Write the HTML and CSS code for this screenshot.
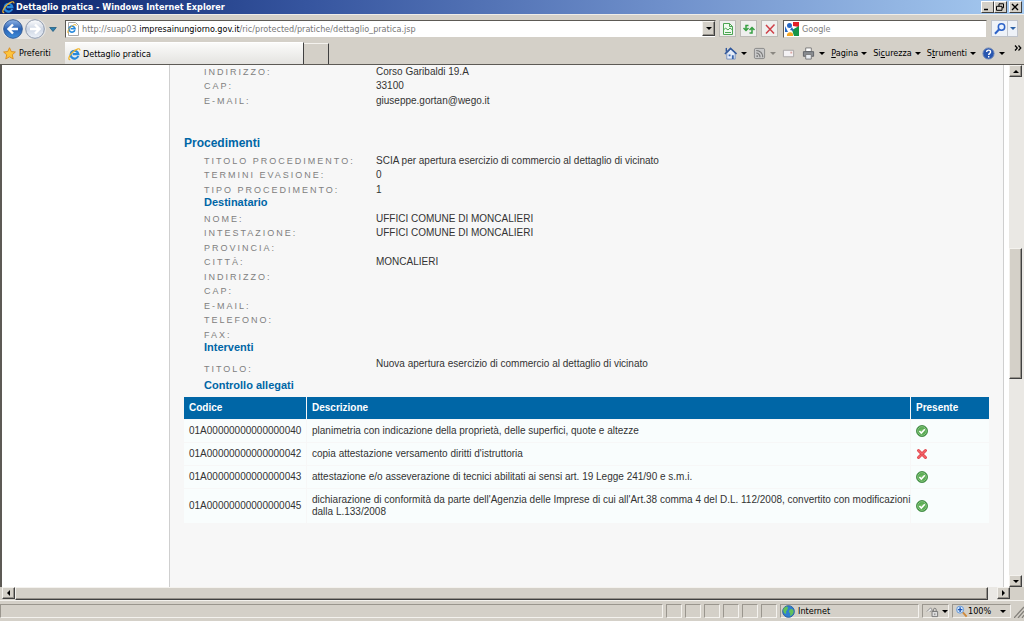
FILE: index.html
```html
<!DOCTYPE html>
<html lang="it">
<head>
<meta charset="utf-8">
<title>Dettaglio pratica</title>
<link rel="stylesheet" href="styles.css">
</head>
<body>
<svg class="defs" aria-hidden="true">
  <defs>
    <linearGradient id="blue" x2="0" y2="1"><stop offset="0" stop-color="#8fb4e6"/><stop offset=".5" stop-color="#2a62b4"/><stop offset="1" stop-color="#3f8fdc"/></linearGradient>
    <linearGradient id="pale" x2="0" y2="1"><stop offset="0" stop-color="#fff"/><stop offset=".5" stop-color="#cdd6e4"/><stop offset="1" stop-color="#edf2f9"/></linearGradient>
    <radialGradient id="green"><stop offset="0" stop-color="#7cc46a"/><stop offset="1" stop-color="#3d9440"/></radialGradient>
    <symbol id="ie" viewBox="0 0 14 14"><path d="M11 8.6A4.2 4.2 0 1 1 11.200 6.600H5" fill="none" stroke="#2789dc" stroke-width="2.300"/><path d="M2.400 12.500C-.8 13 1.500 7.500 5.500 4S13-.4 12.800 2.600" fill="none" stroke="#efb32b" stroke-width="1.300"/></symbol>
    <symbol id="ok" viewBox="0 0 12 12"><circle cx="6" cy="6" r="5.500" fill="url(#green)" stroke="#37813a" stroke-width=".8"/><circle cx="6" cy="6" r="4.300" fill="none" stroke="#a4d897" stroke-width=".7"/><path d="M3.400 6l1.900 2 3.500-3.700" fill="none" stroke="#fff" stroke-width="1.600"/></symbol>
    <symbol id="ko" viewBox="0 0 12 12"><path d="M2.500 2.500l7 7M9.500 2.500l-7 7" stroke="#e0444b" stroke-width="3" stroke-linecap="round"/><path d="M2.500 2.500l7 7M9.500 2.500l-7 7" stroke="#f4656a" stroke-width="1.400" stroke-linecap="round"/></symbol>
  </defs>
</svg>

<header class="titlebar">
  <svg class="icon"><use href="#ie"/></svg>
  <h1 class="window-title">Dettaglio pratica - Windows Internet Explorer</h1>
  <button class="win-btn" aria-label="Riduci a icona"><svg viewBox="0 0 10 8"><path d="M2 6.500h4" stroke="#000" stroke-width="1.500"/></svg></button>
  <button class="win-btn" aria-label="Ripristina"><svg viewBox="0 0 10 8"><path d="M4 3V.8h4.500v4H7M1.500 3.300H7v4H1.500z" fill="none" stroke="#000"/></svg></button>
  <button class="win-btn win-close" aria-label="Chiudi"><svg viewBox="0 0 10 8"><path d="M2 1l6 6M8 1L2 7" stroke="#000" stroke-width="1.400"/></svg></button>
</header>

<div class="navbar">
  <div class="history">
    <button class="flat" aria-label="Indietro"><svg class="round" viewBox="0 0 20 20"><circle cx="10" cy="10" r="9.300" fill="url(#blue)" stroke="#345b94"/><path d="M15 10H6M10 5.500L5.500 10l4.500 4.500" fill="none" stroke="#fff" stroke-width="2.400"/></svg></button>
    <button class="flat" aria-label="Avanti"><svg class="round" viewBox="0 0 20 20"><circle cx="10" cy="10" r="9.300" fill="url(#pale)" stroke="#8b97ab"/><path d="M5 10h9M10 5.500l4.500 4.500-4.500 4.500" fill="none" stroke="#fff" stroke-width="2.400"/></svg></button>
  </div>
  <button class="flat recent" aria-label="Pagine recenti"><svg class="tiny" viewBox="0 0 8 8"><path d="M.7 2.500h6.600L4 6.500z" fill="#2d7fae" stroke="#195578" stroke-width=".7"/></svg></button>
  <div class="address">
    <svg class="page-icon" viewBox="0 0 12 14"><path d="M1.500.5h7l3 3v10h-10z" fill="#fff" stroke="#a8a8a8"/><use href="#ie" x="0" y="2" width="10" height="10"/></svg>
    <div class="url" role="textbox" contenteditable="true" spellcheck="false" aria-label="Indirizzo">http://suap03.<span class="domain">impresainungiorno.gov.it</span>/ric/protected/pratiche/dettaglio_pratica.jsp</div>
    <button class="raised drop" aria-label="Mostra indirizzi"><i class="down"></i></button>
  </div>
  <button class="tool" aria-label="Visualizzazione compatibilità"><svg viewBox="0 0 14 14"><path d="M2.500 1.500h6l3 3v8h-9zM8.500 1.500v3h3" fill="#eefaee" stroke="#4ba552"/><path d="M2.500 8l2-2 2.500 2 2-2 2.500 2M4 10.500h6" fill="none" stroke="#4ba552"/></svg></button>
  <button class="tool" aria-label="Aggiorna"><svg viewBox="0 0 14 14"><path d="M6.500 3.500H4v4M1.500 6L4 8.500 6.500 6M7.500 11H10V6.500M7.500 8L10 5.500 12.500 8" fill="none" stroke="#37a043" stroke-width="1.500"/></svg></button>
  <button class="tool" aria-label="Interrompi"><svg viewBox="0 0 14 14"><path d="M3 3l8 8.500M11.500 2.500L3 11.500" fill="none" stroke="#cf4048" stroke-width="1.500"/></svg></button>
  <div class="search">
    <svg class="google" viewBox="0 0 14 14"><path fill="#fff" d="M0 0h14v14H0z"/><path d="M8 0h6v5L8 4z" fill="#e21f26"/><path d="M14 4v10H9L7 8z" fill="#159447"/><path d="M2 14c-1-4 5-5 6-2v2z" fill="#f5a623"/><circle cx="4.500" cy="3.500" r="2.500" fill="#2466c4"/><path d="M0 4l3 6H0z" fill="#2466c4"/><path d="M7 5l2 4-4-1z" fill="#2466c4"/></svg>
    <input class="search-input" type="text" placeholder="Google" aria-label="Cerca">
  </div>
  <div class="search-go">
    <button class="go" aria-label="Avvia ricerca"><svg viewBox="0 0 14 14"><circle cx="8.500" cy="5" r="3.200" fill="#eaf3ff" stroke="#2c62c8" stroke-width="1.500"/><path d="M6 7.500L2 11.800" stroke="#2c62c8" stroke-width="2"/></svg></button>
    <button class="go go-menu" aria-label="Opzioni di ricerca"><i class="down down-blue"></i></button>
  </div>
</div>

<div class="tabbar">
  <button class="flat favorites"><svg class="icon" viewBox="0 0 14 14"><path d="M7 .8l1.900 4.100 4.400.5-3.300 3 1 4.500-4-2.300-4 2.300 1-4.500-3.300-3 4.400-.5z" fill="#fdc43c" stroke="#db8c1c"/></svg>Preferiti</button>
  <button class="tab"><svg class="icon"><use href="#ie"/></svg>Dettaglio pratica</button>
  <button class="new-tab" aria-label="Nuova scheda"></button>
  <nav class="commands" aria-label="Barra dei comandi">
    <button class="flat cmd" aria-label="Pagina iniziale"><svg class="icon" viewBox="0 0 14 14"><path d="M3 7v6h9V6L7.500 2z" fill="#e5edfa" stroke="#7a93bd"/><path d="M1 7.500L7 1.500l6.500 6" fill="none" stroke="#31589d" stroke-width="1.700"/><path d="M2.500 1v4" stroke="#31589d" stroke-width="1.500"/><path d="M5 8h2v2H5zM8.500 9h2v4h-2z" fill="#3a66ae"/></svg><i class="down"></i></button>
    <button class="flat cmd" aria-label="Feed"><svg class="icon" viewBox="0 0 14 14"><rect x="1.500" y="1.500" width="11" height="11" rx="1.500" fill="#c9c9c9" stroke="#858585"/><circle cx="4.500" cy="9.800" r="1" fill="#777"/><path d="M3.500 6.500a4 4 0 0 1 4 4.500M3.500 3.700a7 7 0 0 1 7 7.300" fill="none" stroke="#777" stroke-width="1.200"/></svg><i class="down down-gray"></i></button>
    <button class="flat cmd" aria-label="Leggi posta"><svg class="icon" viewBox="0 0 14 14"><path d="M1.500 3.500h11v7h-11z" fill="#f4f2f4" stroke="#a8a4a4"/><path d="M9 5h2v2H9z" fill="#dca7a0"/></svg></button>
    <button class="flat cmd" aria-label="Stampa"><svg class="icon" viewBox="0 0 14 14"><path d="M4 1h6v4H4z" fill="#fff" stroke="#777"/><path d="M1.500 5h11v5h-11z" fill="#8a8d92" stroke="#5e6166"/><path d="M4 8h6v5H4z" fill="#e9edf2" stroke="#777"/></svg><i class="down"></i></button>
    <button class="flat cmd"><span><u>P</u>agina</span><i class="down"></i></button>
    <button class="flat cmd"><span>Si<u>c</u>urezza</span><i class="down"></i></button>
    <button class="flat cmd"><span>S<u>t</u>rumenti</span><i class="down"></i></button>
    <button class="flat cmd" aria-label="Guida"><svg class="icon" viewBox="0 0 14 14"><circle cx="7" cy="7" r="6" fill="#2856b0" stroke="#7189b5"/><path d="M5 5.500c0-3 4.300-2.700 4.200-.2C9.200 6.800 7.200 7 7.200 8.700M7.200 9.800v1.400" fill="none" stroke="#fff" stroke-width="1.500"/></svg><i class="down"></i></button>
    <button class="flat more" aria-label="Altri comandi"><svg viewBox="0 0 8 6"><path d="M1 .5L3.300 3 1 5.500M4.500.5L6.800 3 4.500 5.500" fill="none" stroke="#000" stroke-width="1.200"/></svg></button>
  </nav>
</div>

<div class="viewport">
  <div class="page">
    <main class="content">
      <dl class="fields">
        <dt>INDIRIZZO:</dt><dd>Corso Garibaldi 19.A</dd>
        <dt>CAP:</dt><dd>33100</dd>
        <dt>E-MAIL:</dt><dd>giuseppe.gortan@wego.it</dd>
      </dl>
      <h2 class="section">Procedimenti</h2>
      <dl class="fields">
        <dt>TITOLO PROCEDIMENTO:</dt><dd>SCIA per apertura esercizio di commercio al dettaglio di vicinato</dd>
        <dt>TERMINI EVASIONE:</dt><dd>0</dd>
        <dt>TIPO PROCEDIMENTO:</dt><dd>1</dd>
      </dl>
      <h3 class="subsection">Destinatario</h3>
      <dl class="fields recipient">
        <dt>NOME:</dt><dd>UFFICI COMUNE DI MONCALIERI</dd>
        <dt>INTESTAZIONE:</dt><dd>UFFICI COMUNE DI MONCALIERI</dd>
        <dt>PROVINCIA:</dt><dd></dd>
        <dt>CITTÀ:</dt><dd>MONCALIERI</dd>
        <dt>INDIRIZZO:</dt><dd></dd>
        <dt>CAP:</dt><dd></dd>
        <dt>E-MAIL:</dt><dd></dd>
        <dt>TELEFONO:</dt><dd></dd>
        <dt>FAX:</dt><dd></dd>
      </dl>
      <h3 class="subsection">Interventi</h3>
      <dl class="fields works">
        <dt>TITOLO:</dt><dd>Nuova apertura esercizio di commercio al dettaglio di vicinato</dd>
      </dl>
      <h3 class="subsection" id="allegati">Controllo allegati</h3>
      <table class="attachments" aria-labelledby="allegati">
        <thead><tr><th class="col-code">Codice</th><th>Descrizione</th><th class="col-present">Presente</th></tr></thead>
        <tbody>
          <tr><td>01A00000000000000040</td><td>planimetria con indicazione della proprietà, delle superfici, quote e altezze</td><td><svg class="mark" role="img" aria-label="Sì"><use href="#ok"/></svg></td></tr>
          <tr><td>01A00000000000000042</td><td>copia attestazione versamento diritti d'istruttoria</td><td><svg class="mark" role="img" aria-label="No"><use href="#ko"/></svg></td></tr>
          <tr><td>01A00000000000000043</td><td>attestazione e/o asseverazione di tecnici abilitati ai sensi art. 19 Legge 241/90 e s.m.i.</td><td><svg class="mark" role="img" aria-label="Sì"><use href="#ok"/></svg></td></tr>
          <tr><td>01A00000000000000045</td><td class="two-lines">dichiarazione di conformità da parte dell'Agenzia delle Imprese di cui all'Art.38 comma 4 del D.L. 112/2008, convertito con modificazioni<br>dalla L.133/2008</td><td><svg class="mark" role="img" aria-label="Sì"><use href="#ok"/></svg></td></tr>
        </tbody>
      </table>
    </main>
  </div>
  <div class="vscroll">
    <button class="raised arrow" aria-label="Scorri in alto"><i class="up"></i></button>
    <div class="before"></div><div class="raised thumb"></div><div class="after"></div>
    <button class="raised arrow" aria-label="Scorri in basso"><i class="down"></i></button>
  </div>
</div>
<div class="hscroll">
  <button class="raised arrow" aria-label="Scorri a sinistra"><i class="left"></i></button>
  <div class="raised hthumb"></div><div class="hrest"></div>
  <button class="raised arrow" aria-label="Scorri a destra"><i class="right"></i></button>
</div>

<footer class="statusbar">
  <div class="pane message"></div>
  <div class="pane small"></div><div class="pane small"></div><div class="pane small"></div><div class="pane small"></div><div class="pane small"></div><div class="pane small"></div>
  <div class="pane zone"><svg class="icon" viewBox="0 0 14 14"><circle cx="7" cy="7" r="6.300" fill="#2f7fd0" stroke="#2a5c9b"/><path d="M3 2.500c3-2 4 0 3 2S4 6 4.500 8 3 10 2 8 1 4 3 2.500zM8.500 5c2-1.500 4 0 4 2s-2 5-3.500 4.500 1-2-.5-3-1-2.500 0-3.500z" fill="#62c15a"/></svg>Internet</div>
  <button class="pane protect" aria-label="Modalità protetta"><svg class="icon" viewBox="0 0 14 14"><path d="M1 7l4-4 2 3-3 1" fill="#eee" stroke="#888"/><path d="M6.500 7h6v5.500h-6z" fill="#ddd" stroke="#777"/><path d="M8 7V5c0-2 3-2 3 0v2M9.500 9v2" fill="none" stroke="#777"/></svg><i class="down"></i></button>
  <button class="pane zoom" aria-label="Livello di zoom"><svg class="icon" viewBox="0 0 14 14"><circle cx="5.500" cy="5" r="3.800" fill="#d8e8fb" stroke="#5d93d4"/><path d="M5.500 2.500v5M3 5h5" stroke="#1f58b5" stroke-width="1.500"/><path d="M8.500 8l4 4.500" stroke="#cf8a3c" stroke-width="2"/></svg><span>100%</span><i class="down zoom-arrow"></i></button>
  <svg class="grip" viewBox="0 0 10 14"><path d="M0 14L10 3M4 14l6-7M8 14l2-3" stroke="#84817b" stroke-width="1.300"/></svg>
</footer>
</body>
</html>
```

FILE: styles.css
```css
* { box-sizing: border-box; }

body {
  margin: 0;
  height: 100vh;
  display: flex;
  flex-direction: column;
  overflow: hidden;
  background: #d4d0c8;
  color: #000;
  font-family: "DejaVu Sans Condensed", "DejaVu Sans", sans-serif;
  font-size: 9px;
}

button { margin: 0; padding: 0; font: inherit; color: inherit; }
svg { display: block; flex: none; }
h1, h2, h3, dl, dd { margin: 0; }

.defs { position: absolute; width: 0; height: 0; }
.icon { width: 13px; height: 13px; }
.flat { display: flex; align-items: center; border: 0; background: none; }

.raised {
  background: #d4d0c8;
  border: 1px solid;
  border-color: #f4f2ee #404040 #404040 #f4f2ee;
  box-shadow: inset -1px -1px #96928b;
}

.down, .up, .left, .right { display: block; flex: none; border: 3px solid transparent; width: 0; height: 0; }
.down { border-top-color: #000; border-bottom: 0; }
.up { border-bottom-color: #000; border-top: 0; }
.left { border-right-color: #000; border-left: 0; }
.right { border-left-color: #000; border-right: 0; }
.down-gray { border-top-color: #8a8781; }
.down-blue { border-top-color: #2c62a8; }

/* Title bar */
.titlebar {
  flex: none;
  display: flex;
  align-items: center;
  height: 14px;
  padding: 0 2px;
  background: linear-gradient(90deg, #0a246a, #36559f 30%, #6f90cb 65%, #a6caf0);
}
.window-title { flex: 1; padding-left: 1px; color: #fff; font-size: 9px; line-height: 14px; }
.win-btn {
  width: 13px;
  height: 12px;
  background: #d4d0c8;
  border: 1px solid;
  border-color: #fff #404040 #404040 #fff;
}
.win-btn svg { width: 10px; height: 8px; }
.win-close { margin-left: 2px; }

/* Address row */
.navbar { flex: none; display: flex; align-items: center; height: 28px; padding: 0 6px 0 2px; border-top: 1px solid #efede8; }
.history { display: flex; gap: 2px; padding: 0 1px; border-radius: 10px; background: #e7e6e4; }
.round { width: 20px; height: 20px; }
.recent { margin: 0 8px 0 3px; }
.tiny { width: 8px; height: 8px; }
.address {
  flex: 1;
  display: flex;
  align-items: center;
  height: 18px;
  margin-right: 1px;
  background: #fff;
  border: 1px solid;
  border-color: #5d5a55 #d4d0c8 #d4d0c8 #5d5a55;
}
.page-icon { width: 12px; height: 14px; margin: 0 3px 0 1px; }
.url { flex: 1; color: #777; white-space: nowrap; overflow: hidden; outline: none; line-height: 14px; }
.domain { color: #000; }
.drop { display: flex; align-items: center; justify-content: center; width: 13px; height: 15px; }
.tool {
  display: flex;
  align-items: center;
  justify-content: center;
  width: 17px;
  height: 17px;
  margin-left: 2px;
  margin-right: 2px;
  border: 1px solid #bcbab6;
  background: #efefee;
}
.tool svg, .go svg { width: 14px; height: 14px; }
.search {
  display: flex;
  align-items: center;
  width: 204px;
  height: 18px;
  margin: 0 4px 0 3px;
  padding-left: 1px;
  background: #fff;
  border: 1px solid;
  border-color: #5d5a55 #d4d0c8 #d4d0c8 #5d5a55;
}
.google { width: 14px; height: 14px; }
.search-input { flex: 1; min-width: 0; border: 0; padding: 0 3px; outline: none; background: none; font: inherit; }
.search-input::placeholder { color: #808080; opacity: 1; }
.search-go { display: flex; }
.go { display: flex; align-items: center; justify-content: center; width: 17px; height: 17px; border: 1px solid #bfc3cb; background: #eef2f8; }
.go-menu { width: 10px; border-left: 0; }

/* Tabs and command bar */
.tabbar { flex: none; display: flex; align-items: stretch; height: 22px; }
.favorites { gap: 3px; width: 65px; padding-left: 3px; }
.tab {
  display: flex;
  align-items: center;
  gap: 2px;
  flex: 0 1 239px;
  padding: 1px 3px 0;
  border: 0;
  border-right: 1px solid #404040;
  border-top: 1px solid #fff;
  background: linear-gradient(#fbfbfa, #e4e3e0);
}
.new-tab { width: 25px; margin-top: 1px; border: 0; border-right: 1px solid #404040; border-top: 1px solid #f4f2ee; background: #d4d0c8; }
.commands { flex: 1; display: flex; align-items: center; justify-content: flex-end; gap: 6px; padding-right: 2px; }
.cmd { gap: 3px; white-space: nowrap; }
.cmd .icon { margin-right: 1px; }
.more { align-self: flex-start; margin-left: 3px; padding-top: 3px; }
.more svg { width: 8px; height: 6px; }

/* Page area */
.viewport { flex: 1; min-height: 0; display: flex; border: solid #5d5a55; border-width: 1px 0 0 2px; background: #fff; }
.page { flex: 1; min-width: 0; padding: 0 5px 0 167px; overflow: hidden; }
.content {
  min-height: 100%;
  padding: 0 14px;
  background: #f7f7f7;
  border: solid #cfcfcf;
  border-width: 0 1px;
  color: #333;
  font-family: "Liberation Sans", Arial, sans-serif;
  font-size: 10px;
}
.fields { display: grid; grid-template-columns: 172px 1fr; padding-left: 20px; line-height: 14px; }
.fields dt { color: #808080; font-size: 9px; letter-spacing: 2px; white-space: nowrap; }
.fields dt:nth-of-type(even) { padding-bottom: 1px; }
.section { margin: 28px 0 4px; color: #0066a6; font-size: 12px; line-height: 14px; }
.subsection { padding-left: 20px; color: #0066a6; font-size: 11px; line-height: 11px; }
.recipient { padding-top: 4px; }
.works { padding-top: 4px; }
.works dt { padding-top: 5px; }
#allegati { margin-top: 4px; }

.attachments {
  table-layout: fixed;
  width: calc(100% + 2px);
  margin: 5px -1px 0;
  border-collapse: separate;
  border-spacing: 1px;
  line-height: 12px;
}
.attachments th { height: 22px; padding: 0 5px; background: #0066a6; color: #fff; text-align: left; }
.attachments td { height: 22px; padding: 5px; background: #f9fdfd; }
.attachments tr > :first-child { padding-right: 4px; }
.attachments .two-lines { white-space: nowrap; padding-right: 0; }
.col-code { width: 122px; }
.col-present { width: 78px; }
.mark { width: 12px; height: 12px; }

/* Scroll bars */
.vscroll { display: flex; flex-direction: column; flex: none; width: 15px; padding-right: 1px; background: #eae8e4; }
.arrow { display: flex; align-items: center; justify-content: center; flex: none; width: 13px; height: 12px; }
.before { flex: 172; }
.thumb { flex: 129; width: 13px; }
.after { flex: 197; }
.hscroll { flex: none; display: flex; height: 13px; padding: 0 14px 0 2px; background: #d4d0c8; }
.hthumb { flex: 973; height: 13px; }
.hrest { flex: 9; background: #eae8e4; }

/* Status bar */
.statusbar { flex: none; display: flex; gap: 3px; height: 21px; padding: 3px 0; border-top: 1px solid #f4f2ee; }
.pane {
  display: flex;
  align-items: center;
  background: #d4d0c8;
  border: 1px solid;
  border-color: #9a968e #f4f2ee #f4f2ee #9a968e;
}
.message { flex: 1; }
.small { width: 16px; }
.zone { width: 139px; gap: 3px; padding-left: 1px; }
.protect { width: 27px; gap: 3px; padding-left: 3px; }
.zoom { width: 59px; padding-left: 2px; }
.zoom-arrow { margin-left: auto; margin-right: 4px; }
.grip { width: 10px; height: 14px; }
```
